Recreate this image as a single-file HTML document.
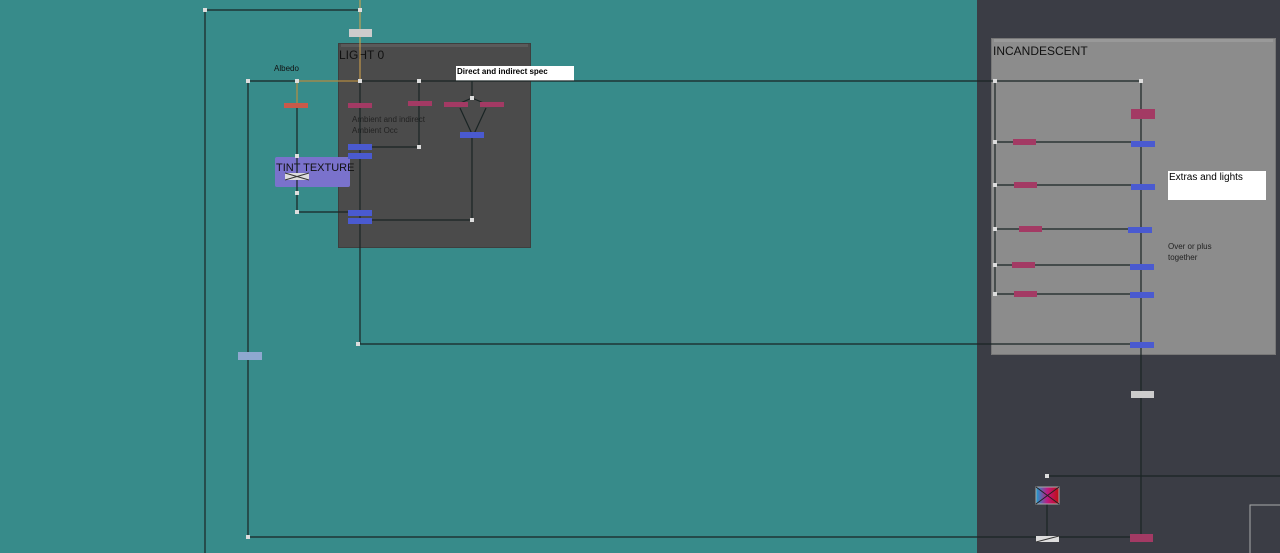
<!DOCTYPE html>
<html><head><style>
body{margin:0;width:1280px;height:553px;overflow:hidden;background:#378b8a;font-family:"Liberation Sans",sans-serif;position:relative}
.a{position:absolute}
.t{position:absolute;white-space:nowrap}
</style></head><body>
<div class="a" style="left:977px;top:0;width:303px;height:553px;background:#3b3d45"></div>
<div class="a" style="left:338px;top:43px;width:193px;height:205px;background:#4b4b4b;border:1px solid #3e3e3e;box-sizing:border-box"></div>
<div class="a" style="left:341px;top:44px;width:187px;height:3px;background:#5a5a5a"></div>
<div class="a" style="left:991px;top:38px;width:285px;height:317px;background:#8c8c8c;border:1px solid #777;box-sizing:border-box"></div>
<div class="a" style="left:994px;top:39px;width:279px;height:3px;background:#999"></div>
<div class="t" style="left:339px;top:48px;font-size:12px;color:#111">LIGHT 0</div>
<div class="t" style="left:993px;top:44px;font-size:12px;color:#111">INCANDESCENT</div>
<div class="t" style="left:274px;top:64px;font-size:8px;color:#111">Albedo</div>
<div class="a" style="left:456px;top:66px;width:118px;height:15px;background:#fff"></div>
<div class="t" style="left:457px;top:67px;font-size:8px;font-weight:bold;color:#000">Direct and indirect spec</div>
<div class="t" style="left:352px;top:114px;font-size:8px;color:#222;line-height:11px">Ambient and indirect<br>Ambient Occ</div>
<div class="a" style="left:1168px;top:171px;width:98px;height:29px;background:#fff"></div>
<div class="t" style="left:1169px;top:172px;font-size:10px;color:#000">Extras and lights</div>
<div class="t" style="left:1168px;top:241px;font-size:8px;color:#222;line-height:11px">Over or plus<br>together</div>
<div class="a" style="left:275px;top:157px;width:75px;height:30px;background:#7a72cc;border-radius:2px"></div>
<div class="t" style="left:276px;top:162px;font-size:11px;color:#111">TINT TEXTURE</div>
<svg class="a" style="left:0;top:0" width="1280" height="553">
<g stroke="#1a2424" stroke-width="1.2" fill="none">
<path d="M205 10H360M205 10V553M248 81H995M248 81V537H1141M297 81V212H350M360 81V344H1141M419 81V147H360M472 81V98M458 104L472 98L486 104M460 108L472 134M486 108L474 134M472 134V220H360M995 81H1141V114M995 81V294M995 142H1141M995 185H1141M995 229H1141M995 265H1141M995 294H1141M1141 114V394M1141 394V537M1047 476H1280M1047 495V537"/>
</g>
<path d="M360 0V81M297 81H360M297 81V104" stroke="#d8a448" stroke-width="1"/>
<g fill="#ddd"><rect x="203" y="8" width="4" height="4"/><rect x="358" y="8" width="4" height="4"/><rect x="295" y="79" width="4" height="4"/><rect x="358" y="79" width="4" height="4"/><rect x="417" y="79" width="4" height="4"/><rect x="470" y="96" width="4" height="4"/><rect x="417" y="145" width="4" height="4"/><rect x="295" y="154" width="4" height="4"/><rect x="295" y="191" width="4" height="4"/><rect x="295" y="210" width="4" height="4"/><rect x="470" y="218" width="4" height="4"/><rect x="356" y="342" width="4" height="4"/><rect x="246" y="535" width="4" height="4"/><rect x="246" y="79" width="4" height="4"/><rect x="993" y="79" width="4" height="4"/><rect x="1139" y="79" width="4" height="4"/><rect x="993" y="140" width="4" height="4"/><rect x="993" y="183" width="4" height="4"/><rect x="993" y="227" width="4" height="4"/><rect x="993" y="263" width="4" height="4"/><rect x="993" y="292" width="4" height="4"/><rect x="1045" y="474" width="4" height="4"/></g>
<g fill="#a33a64"><rect x="284" y="103" width="24" height="5"/><rect x="348" y="103" width="24" height="5"/><rect x="408" y="101" width="24" height="5"/><rect x="444" y="102" width="24" height="5"/><rect x="480" y="102" width="24" height="5"/><rect x="1131" y="109" width="24" height="10"/><rect x="1013" y="139" width="23" height="6"/><rect x="1014" y="182" width="23" height="6"/><rect x="1019" y="226" width="23" height="6"/><rect x="1012" y="262" width="23" height="6"/><rect x="1014" y="291" width="23" height="6"/><rect x="1130" y="534" width="23" height="8"/></g>
<rect x="284" y="103" width="24" height="5" fill="#c85a4a"/>
<g fill="#4a5ad0"><rect x="348" y="144" width="24" height="6"/><rect x="348" y="153" width="24" height="6"/><rect x="460" y="132" width="24" height="6"/><rect x="348" y="210" width="24" height="6"/><rect x="348" y="218" width="24" height="6"/><rect x="1131" y="141" width="24" height="6"/><rect x="1131" y="184" width="24" height="6"/><rect x="1128" y="227" width="24" height="6"/><rect x="1130" y="264" width="24" height="6"/><rect x="1130" y="292" width="24" height="6"/><rect x="1130" y="342" width="24" height="6"/></g>
<rect x="238" y="352" width="24" height="8" fill="#8fa8d0"/>
<rect x="349" y="29" width="23" height="8" fill="#ccc"/>
<rect x="1131" y="391" width="23" height="7" fill="#ccc"/>
<rect x="285" y="173" width="24" height="7" fill="#ddd"/><path d="M285 173L309 180M285 180L309 173" stroke="#333"/>
<defs><linearGradient id="g" x1="0" x2="1"><stop offset="0" stop-color="#18a0d0"/><stop offset=".5" stop-color="#c01880"/><stop offset="1" stop-color="#c01010"/></linearGradient></defs>
<rect x="1036" y="487" width="23" height="17" fill="url(#g)" stroke="#aaa"/><path d="M1036 487L1059 504M1059 487L1036 504" stroke="#222"/>
<rect x="1036" y="536" width="23" height="6" fill="#ddd"/><path d="M1036 542L1059 536" stroke="#333"/>
<path d="M1250 553V505H1280" stroke="#aaa" fill="none"/>
</svg>
</body></html>
